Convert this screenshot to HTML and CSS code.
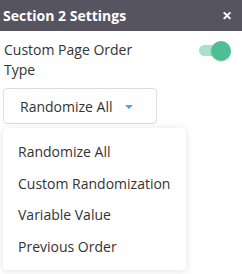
FILE: index.html
```html
<!DOCTYPE html>
<html lang="en">
<head>
    <meta charset="UTF-8">
    <title>Section 2 Settings</title>
    <link rel="stylesheet" href="styles.css">
</head>
<body>
    <div class="panel">
        <div class="panel-header">
            <span class="panel-title">Section 2 Settings</span>
            <span class="close">&#x2715;</span>
        </div>
        <div class="panel-body">
            <div class="setting-row">
                <label>Custom Page Order Type</label>
                <div class="toggle"><div class="knob"></div></div>
            </div>
            <div class="select">
                <span>Randomize All</span>
                <span class="caret"></span>
            </div>
            <ul class="menu">
                <li>Randomize All</li>
                <li>Custom Randomization</li>
                <li>Variable Value</li>
                <li>Previous Order</li>
            </ul>
        </div>
    </div>
</body>
</html>
```

FILE: styles.css
```css
* {
    margin: 0;
    padding: 0;
    box-sizing: border-box;
    font-family: "Open Sans", sans-serif;
}

body {
    background-color: white;
    width: 242px;
    height: 274px;
    overflow: hidden;
}

.panel-header {
    height: 31px;
    background-color: #55545f;
    color: white;
    display: flex;
    align-items: center;
    justify-content: space-between;
    padding: 0 10px 0 3px;
}

.panel-title {
    font-size: 14px;
    font-weight: bold;
}

.close {
    font-size: 12px;
    font-weight: bold;
}

.panel-body {
    padding: 9px 3px 0 3px;
}

.setting-row {
    display: flex;
    justify-content: space-between;
    align-items: flex-start;
}

label {
    width: 130px;
    font-size: 14px;
    line-height: 20px;
    color: #333;
    padding-left: 1px;
}

.toggle {
    position: relative;
    width: 26px;
    height: 11px;
    border-radius: 6px;
    background-color: #a8e0cc;
    margin: 5px 14px 0 0;
}

.knob {
    position: absolute;
    right: -6px;
    top: -4px;
    width: 20px;
    height: 20px;
    border-radius: 50%;
    background-color: #4dbf95;
    box-shadow: 0 1px 2px rgba(0, 0, 0, 0.15);
}

.select {
    width: 154px;
    height: 36px;
    margin-top: 8px;
    border: 1px solid #dcdce0;
    border-radius: 4px;
    display: flex;
    align-items: center;
    padding-left: 16px;
    font-size: 14px;
    color: #333;
}

.caret {
    width: 0;
    height: 0;
    border-left: 4px solid transparent;
    border-right: 4px solid transparent;
    border-top: 4px solid #4ca3e0;
    margin-left: 13px;
    margin-top: 2px;
}

.menu {
    list-style: none;
    width: 183px;
    margin-top: 4px;
    padding: 8px 0;
    border-radius: 4px;
    background-color: white;
    box-shadow: 0 1px 8px rgba(0, 0, 0, 0.12);
}

.menu li {
    font-size: 14px;
    line-height: 31.5px;
    padding-left: 15px;
    color: #333;
}
```
